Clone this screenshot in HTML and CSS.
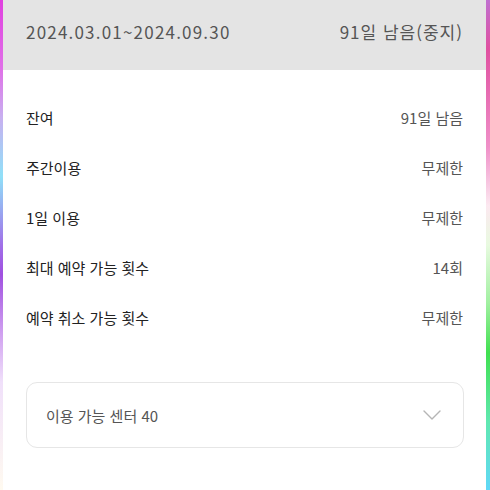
FILE: index.html
```html
<!DOCTYPE html>
<html lang="ko">
<head>
    <meta charset="UTF-8">
    <meta name="viewport" content="width=device-width, initial-scale=1.0">
    <title>이용권 정보</title>
    <link rel="stylesheet" href="styles.css">
</head>
<body>
    <div class="frame">
        <div class="edge edge-left"></div>
        <div class="content">
            <div class="period">
                <span class="period-date">2024.03.01~2024.09.30</span>
                <span class="period-left">91일 남음(중지)</span>
            </div>
            <div class="info">
                <div class="info-row">
                    <span class="info-label">잔여</span>
                    <span class="info-value">91일 남음</span>
                </div>
                <div class="info-row">
                    <span class="info-label">주간이용</span>
                    <span class="info-value">무제한</span>
                </div>
                <div class="info-row">
                    <span class="info-label">1일 이용</span>
                    <span class="info-value">무제한</span>
                </div>
                <div class="info-row">
                    <span class="info-label">최대 예약 가능 횟수</span>
                    <span class="info-value">14회</span>
                </div>
                <div class="info-row">
                    <span class="info-label">예약 취소 가능 횟수</span>
                    <span class="info-value">무제한</span>
                </div>
            </div>
            <div class="centers">
                <span class="centers-text">이용 가능 센터 40</span>
                <svg class="centers-arrow" width="18" height="10" viewBox="0 0 18 10">
                    <path d="M1 1 L9 9 L17 1" fill="none" stroke="#b5b5b5" stroke-width="1.4" stroke-linecap="round" stroke-linejoin="round"/>
                </svg>
            </div>
        </div>
        <div class="edge edge-right"></div>
    </div>
</body>
</html>
```

FILE: styles.css
```css
body {
    margin: 0;
    background-color: #ffffff;
    font-family: "Noto Sans CJK KR", "Noto Sans", sans-serif;
}

.frame {
    display: flex;
    height: 490px;
    overflow: hidden;
}

.edge {
    flex: 0 0 3px;
}

.edge-left {
    background: linear-gradient(to bottom,
        #e040e0 0%, #e070e8 14%, #c8b0f0 24%, #90e0f8 36%,
        #a070e8 50%, #a050e0 56%, #d0a0f0 68%, #f0e0fa 78%,
        #fffaf0 100%);
}

.edge-right {
    flex-basis: 4px;
    background: linear-gradient(to bottom,
        #c070d0 0%, #e050a0 10%, #f090c8 30%, #fce8f0 42%,
        #e8fae0 50%, #a0f0a0 62%, #40e050 72%, #60e8b0 86%,
        #60d8f8 100%);
}

.content {
    flex: 1;
    display: flex;
    flex-direction: column;
}

.period {
    display: flex;
    justify-content: space-between;
    align-items: center;
    box-sizing: border-box;
    height: 70px;
    padding: 0 23px 8px;
    background-color: #e4e4e4;
    color: #555555;
    font-size: 17px;
    letter-spacing: 1px;
}

.period-date {
    letter-spacing: 1.2px;
}

.info {
    padding: 22px 23px 0;
}

.info-row {
    display: flex;
    justify-content: space-between;
    align-items: center;
    height: 50px;
    font-size: 15px;
}

.info-label {
    color: #222222;
}

.info-value {
    color: #555555;
}

.centers {
    display: flex;
    justify-content: space-between;
    align-items: center;
    height: 64px;
    margin: 40px 22px 0 23px;
    padding: 0 22px 0 19px;
    border: 1px solid #e6e6e6;
    border-radius: 11px;
    color: #555555;
    font-size: 15px;
}
```
